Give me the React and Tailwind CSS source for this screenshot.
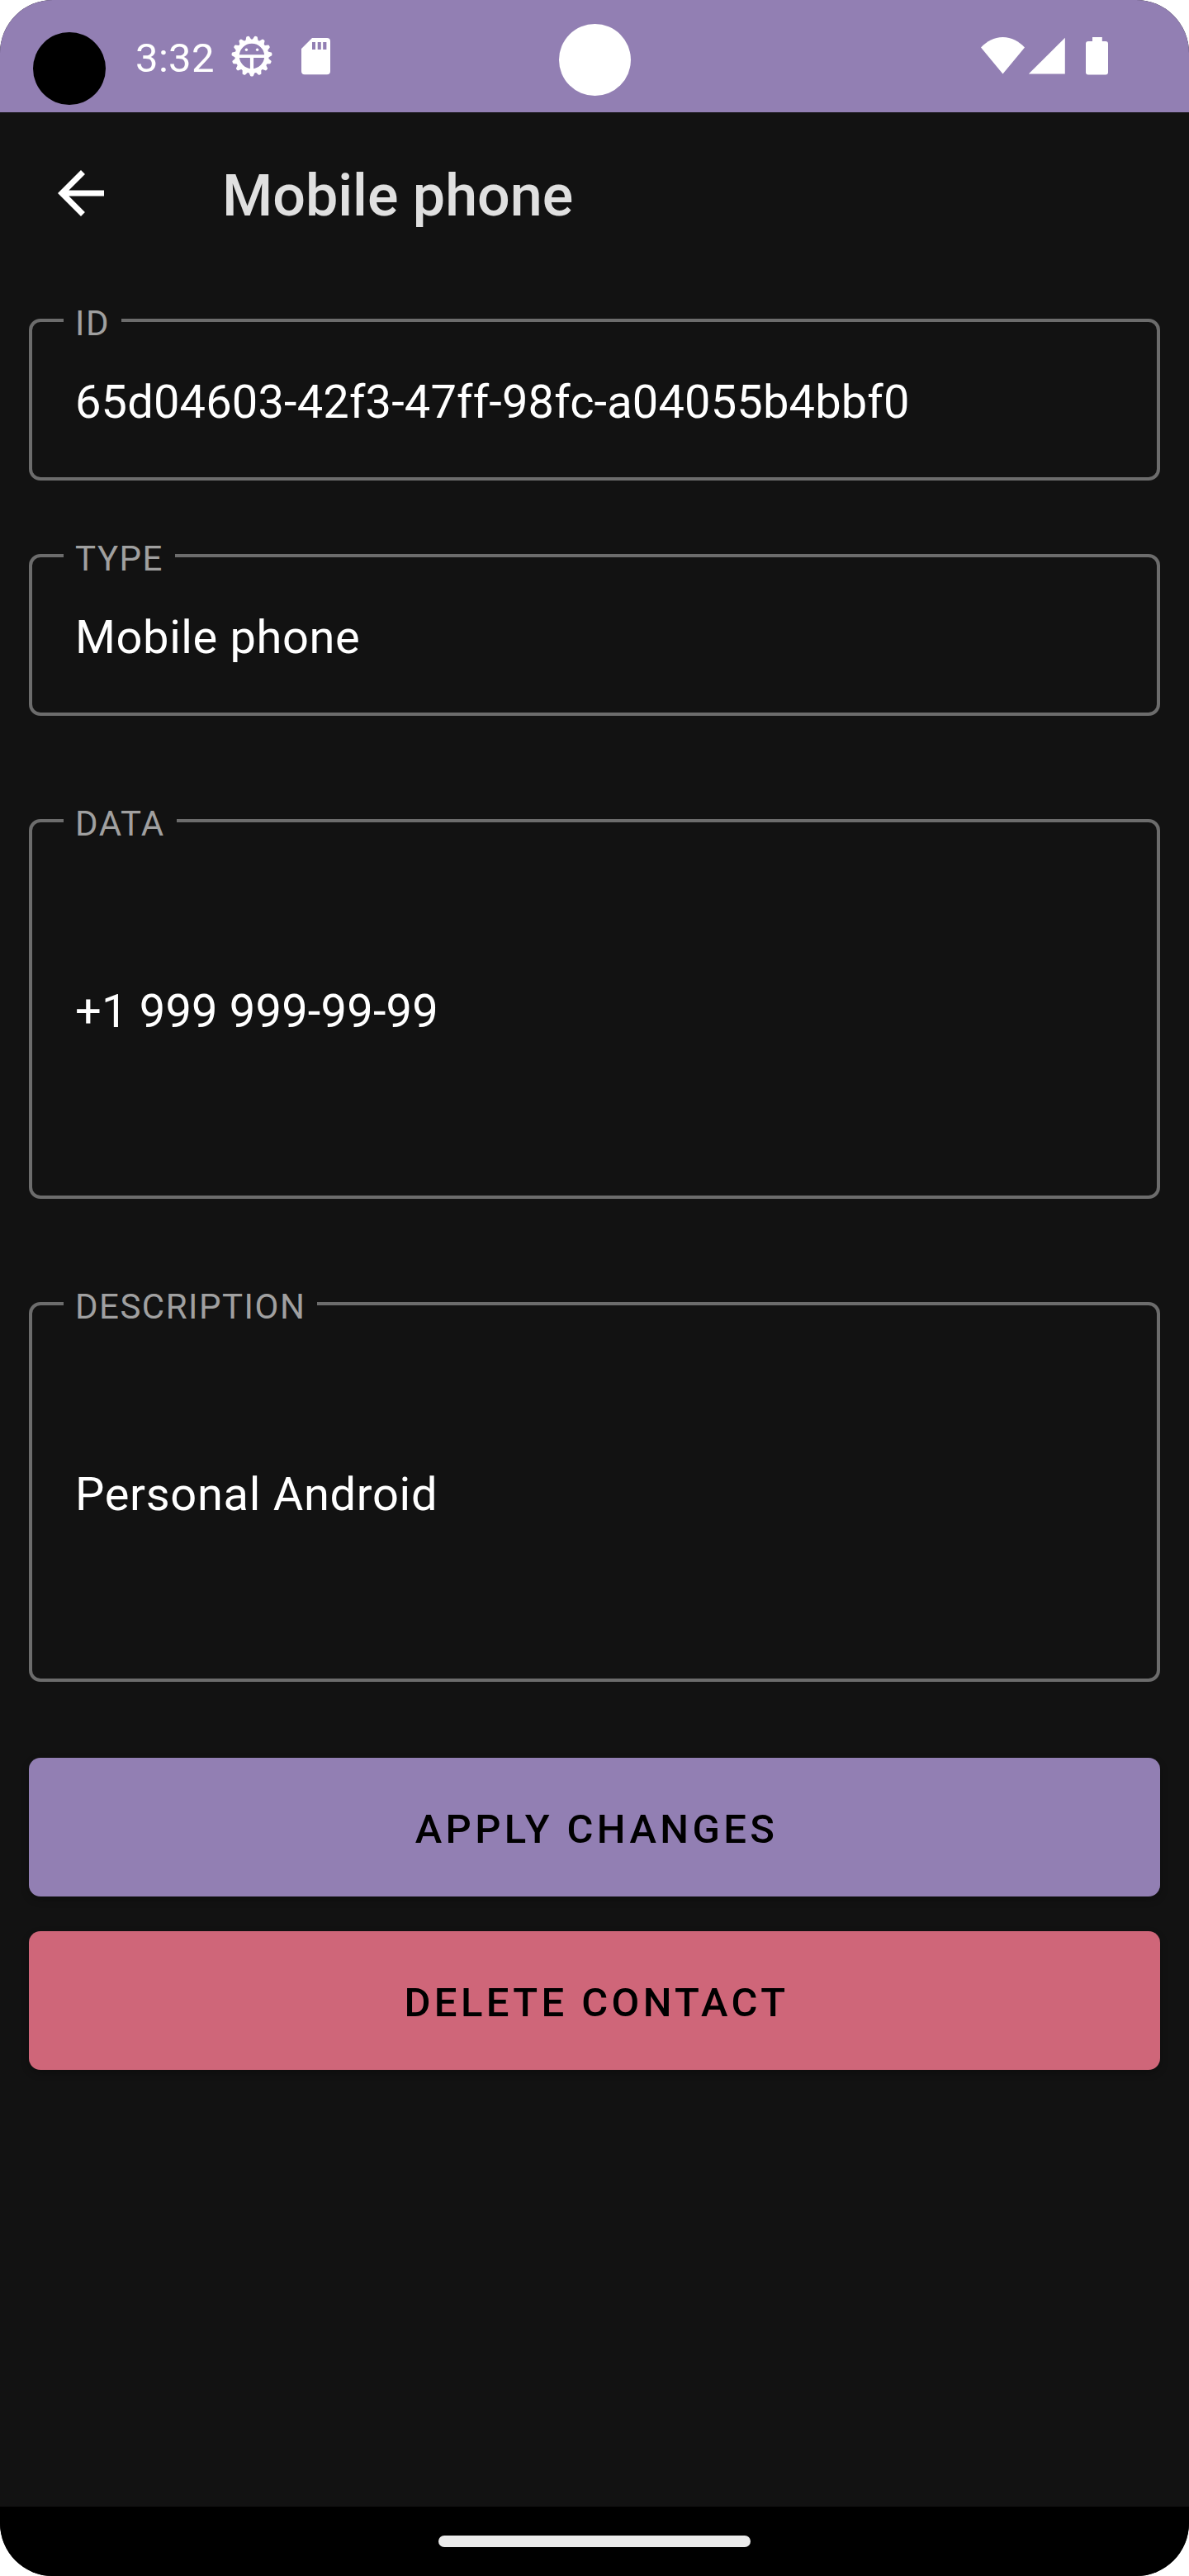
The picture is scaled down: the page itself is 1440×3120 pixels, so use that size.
const toothAngles = Array.from({ length: 15 }, (_, i) => i * 24);

function GearBug() {
  return (
    <svg className="h-[52px] w-[52px]" viewBox="-26 -26 52 52" fill="none" stroke="#fff">
      <circle r="17.9" strokeWidth="5.4" />
      {toothAngles.map((angle) => (
        <path
          key={angle}
          d="M-2.800 18.500L-0.800 23.300H0.800L2.800 18.500Z"
          transform={`rotate(${angle})`}
          fill="#fff"
          strokeWidth="2.4"
          strokeLinejoin="round"
        />
      ))}
      <path d="M-17 0.200H17" strokeWidth="3.8" />
      <path d="M0 0V17" strokeWidth="4.2" />
      <circle cx="-6.600" cy="-7.800" r="1.7" fill="#fff" stroke="none" />
      <circle cx="6.600" cy="-7.800" r="1.7" fill="#fff" stroke="none" />
    </svg>
  );
}

function SdCard() {
  return (
    <svg className="h-[45px] w-[35px]" viewBox="0 0 35 45" fill="#fff">
      <path
        fillRule="evenodd"
        d="M13 0H31a4 4 0 0 1 4 4V40.300a4 4 0 0 1-4 4H4a4 4 0 0 1-4-4V13ZM13 5V14H17V5ZM19.700 5V14H23.800V5ZM26.200 5V14H30.400V5Z"
      />
    </svg>
  );
}

function StatusBar() {
  return (
    <header className="flex h-[136px] shrink-0 items-start bg-[#927fb3] text-white">
      <div className="mt-[39px] ml-10 h-[88px] w-[88px] rounded-full bg-black" />
      <span className="mt-[42px] ml-9 w-[98px] text-[49px] leading-[57px] tracking-[0.35px] whitespace-nowrap">3:32</span>
      <div className="mt-[42px] ml-[17px]">
        <GearBug />
      </div>
      <div className="mt-[46px] ml-[34px]">
        <SdCard />
      </div>
      <div className="mt-[29px] ml-[277px] h-[87px] w-[87px] rounded-full bg-white" />
      <svg className="mt-[45px] ml-[424px] h-[46px] w-[154px]" viewBox="0 0 154 46" fill="#fff">
        <path d="M26.500 44.500 0 12.500C7 5 16 0 26.500 0S46 5 53 12.500Z" />
        <path d="M101.800 0.800V44.600H57.800Z" />
        <path d="M135 0h11.800v5H151a3 3 0 0 1 3 3V42.600a3 3 0 0 1-3 3H130a3 3 0 0 1-3-3V8a3 3 0 0 1 3-3h5Z" />
      </svg>
    </header>
  );
}

function Field({ label, value, className, valueClassName }) {
  return (
    <fieldset className={`rounded-[14px] border-4 border-[#6c6c6c] pl-[52px] ${className}`}>
      <legend className="-ml-[14px] h-1 px-[14px] text-[42px] tracking-[1.5px] text-[#a0a0a0]">
        <span className="relative top-1 block h-1 leading-[4px]">{label}</span>
      </legend>
      <p className={`text-[56px] whitespace-nowrap text-white ${valueClassName}`}>{value}</p>
    </fieldset>
  );
}

function ActionButton({ children, className }) {
  return (
    <button
      className={`h-[168px] rounded-[14px] pt-[5px] pl-[5px] text-[49px] leading-[57px] font-medium tracking-[4.375px] text-black shadow-[0_4px_10px_rgba(0,0,0,0.25)] ${className}`}
    >
      {children}
    </button>
  );
}

export default function App() {
  return (
    <div className="h-[3120px] w-[1440px] bg-white font-['Roboto',sans-serif]">
      <div className="flex h-full flex-col overflow-hidden rounded-[64px] bg-[#121212]">
        <StatusBar />
        <div className="flex h-[196px] shrink-0 items-center pl-14">
          <svg className="h-[84px] w-[84px]" viewBox="0 0 24 24" fill="#fff">
            <path d="M20 11H7.830l5.590-5.590L12 4l-8 8 8 8 1.410-1.410L7.830 13H20v-2z" />
          </svg>
          <h1 className="mt-1.5 ml-[129px] text-[70px] leading-[82px] font-medium text-[#e0e0e0]">Mobile phone</h1>
        </div>
        <main className="flex flex-1 flex-col px-[35px] pt-[54px]">
          <Field
            label="ID"
            value="65d04603-42f3-47ff-98fc-a04055b4bbf0"
            className="h-[196px]"
            valueClassName="leading-[194px] tracking-[0.15px]"
          />
          <Field
            label="TYPE"
            value="Mobile phone"
            className="mt-[89px] h-[196px]"
            valueClassName="leading-[194px] tracking-[0.62px]"
          />
          <Field
            label="DATA"
            value="+1 999 999-99-99"
            className="mt-[125px] h-[460px]"
            valueClassName="leading-[458px] tracking-[0.2px]"
          />
          <Field
            label="DESCRIPTION"
            value="Personal Android"
            className="mt-[125px] h-[460px]"
            valueClassName="leading-[458px] tracking-[0.7px]"
          />
          <ActionButton className="mt-[92px] bg-[#927fb3]">APPLY CHANGES</ActionButton>
          <ActionButton className="mt-[42px] bg-[#cf6679]">DELETE CONTACT</ActionButton>
        </main>
        <footer className="flex h-[84px] shrink-0 items-center justify-center bg-black">
          <div className="h-[14px] w-[378px] rounded-full bg-[#ebebeb]" />
        </footer>
      </div>
    </div>
  );
}
